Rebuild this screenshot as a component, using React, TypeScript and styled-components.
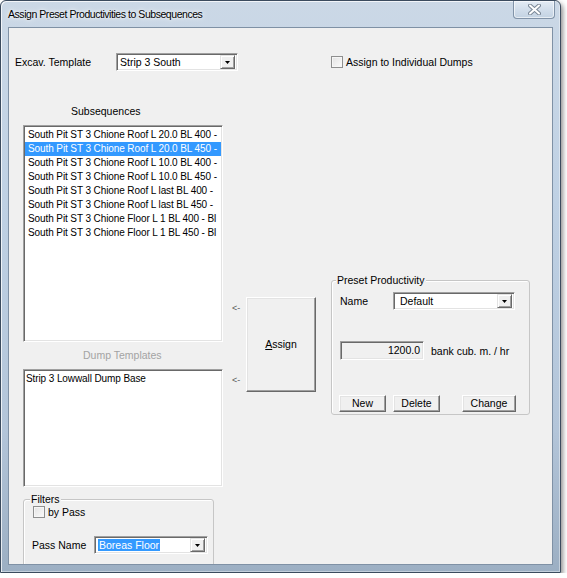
import React from "react";
import styled, { createGlobalStyle } from "styled-components";

const GlobalStyle = createGlobalStyle`
  html, body {
    margin: 0;
    padding: 0;
    background: #ffffff;
  }
  body {
    font-family: "Liberation Sans", Arial, sans-serif;
    font-size: 10.5px;
    color: #000;
  }
  * {
    box-sizing: border-box;
  }
`;

const Window = styled.div`
  width: 561px;
  height: 573px;
  display: flex;
  flex-direction: column;
  padding: 0 7px 7px 7px;
  border: 1px solid #3b4b5e;
  border-radius: 6px 6px 0 0;
  background: linear-gradient(180deg, #cbd8e6 0%, #bfd1e4 35%, #b3c5d9 75%, #9cafc3 100%);
  box-shadow: 2px 3px 5px rgba(0, 0, 0, 0.45), inset 1px 1px 0 rgba(255, 255, 255, 0.75),
    inset -1px -1px 0 rgba(255, 255, 255, 0.4);
`;

const TitleBar = styled.div`
  height: 26px;
  display: flex;
  align-items: flex-start;
`;

const TitleText = styled.span`
  margin-top: 6px;
  line-height: 14px;
  font-size: 10.5px;
  letter-spacing: -0.45px;
  color: #000;
  text-shadow: 0 0 6px rgba(255, 255, 255, 0.95), 0 0 3px rgba(255, 255, 255, 0.9);
`;

const CloseButton = styled.div`
  margin-left: auto;
  margin-right: -2px;
  width: 42px;
  height: 18px;
  display: flex;
  align-items: center;
  justify-content: center;
  border: 1px solid #8193a8;
  border-top: none;
  border-radius: 0 0 4px 4px;
  background: linear-gradient(180deg, #e4ecf5 0%, #d2deeb 50%, #c3d2e2 100%);
  box-shadow: inset 0 0 0 1px rgba(255, 255, 255, 0.6);
`;

const Body = styled.div`
  flex: 1;
  background: #f0f0f0;
  border: 1px solid #7f91a5;
  overflow: hidden;
`;

const TopRow = styled.div`
  display: flex;
  align-items: center;
  height: 18px;
  margin: 25px 0 0 6px;
`;

const FieldLabel = styled.span<{ $w: number }>`
  width: ${({ $w }) => $w}px;
  flex-shrink: 0;
  white-space: nowrap;
`;

const Combo = styled.div<{ $w: number }>`
  width: ${({ $w }) => $w}px;
  height: 18px;
  flex-shrink: 0;
  display: flex;
  align-items: center;
  padding: 2px;
  background: #fff;
  border: 1px solid;
  border-color: #a0a0a0 #ffffff #ffffff #a0a0a0;
  box-shadow: inset 1px 1px 0 #696969, inset -1px -1px 0 #e3e3e3;
`;

const ComboText = styled.span<{ $pl: number }>`
  flex: 1;
  padding-left: ${({ $pl }) => $pl}px;
  white-space: nowrap;
  overflow: hidden;
  line-height: 14px;
`;

const Highlight = styled.span`
  background: #3399ff;
  color: #fff;
  padding: 0 1px;
`;

const DropButton = styled.span`
  width: 15px;
  height: 14px;
  flex-shrink: 0;
  display: flex;
  align-items: center;
  justify-content: center;
  background: #f0f0f0;
  border: 1px solid;
  border-color: #e3e3e3 #696969 #696969 #e3e3e3;
  box-shadow: inset 1px 1px 0 #ffffff, inset -1px -1px 0 #a0a0a0;
`;

const CheckRow = styled.label<{ $ml: number }>`
  display: flex;
  align-items: center;
  margin-left: ${({ $ml }) => $ml}px;
  height: 12px;
`;

const CheckBox = styled.span`
  width: 12px;
  height: 12px;
  flex-shrink: 0;
  margin-right: 3px;
  border: 1px solid #8e8f8f;
  background: linear-gradient(135deg, #e2e2e2 0%, #fbfbfb 100%);
  box-shadow: inset 0 0 0 1px #f6f6f6;
`;

const MainRow = styled.div`
  display: flex;
  align-items: flex-start;
  margin-top: 33px;
  padding-left: 14px;
`;

const LeftCol = styled.div`
  width: 200px;
  display: flex;
  flex-direction: column;
`;

const SectionLabel = styled.div<{ $pl: number; $dim?: boolean; $mt?: number }>`
  height: 14px;
  line-height: 14px;
  padding-left: ${({ $pl }) => $pl}px;
  margin-top: ${({ $mt }) => $mt ?? 0}px;
  margin-bottom: 7px;
  color: ${({ $dim }) => ($dim ? "#a3a3a3" : "#000")};
`;

const ListBox = styled.div<{ $h: number }>`
  height: ${({ $h }) => $h}px;
  background: #fff;
  border: 1px solid;
  border-color: #a0a0a0 #ffffff #ffffff #a0a0a0;
  box-shadow: inset 1px 1px 0 #696969, inset -1px -1px 0 #e3e3e3;
  padding: 2px 1px 1px 1px;
  overflow: hidden;
`;

const ListItem = styled.div<{ $selected?: boolean; $pl?: number }>`
  height: 14px;
  line-height: 14px;
  padding-left: ${({ $pl }) => $pl ?? 3}px;
  font-size: 10px;
  letter-spacing: -0.1px;
  white-space: nowrap;
  overflow: hidden;
  background: ${({ $selected }) => ($selected ? "#3399ff" : "transparent")};
  color: ${({ $selected }) => ($selected ? "#fff" : "#000")};
`;

const Group = styled.div<{ $w: number; $h: number; $mt: number; $pt: number; $pl: number }>`
  position: relative;
  width: ${({ $w }) => $w}px;
  height: ${({ $h }) => $h}px;
  margin-top: ${({ $mt }) => $mt}px;
  padding: ${({ $pt, $pl }) => `${$pt}px 0 0 ${$pl}px`};
  border: 1px solid #c6c6c6;
  border-radius: 3px;
  box-shadow: inset 1px 1px 0 #fff;
  flex-shrink: 0;
`;

const Legend = styled.span<{ $left: number }>`
  position: absolute;
  top: -8px;
  left: ${({ $left }) => $left}px;
  padding: 0 1px;
  line-height: 14px;
  background: #f0f0f0;
  white-space: nowrap;
`;

const FormRow = styled.div<{ $mt?: number; $h: number }>`
  display: flex;
  align-items: center;
  height: ${({ $h }) => $h}px;
  margin-top: ${({ $mt }) => $mt ?? 0}px;
`;

const MidCol = styled.div`
  display: flex;
  margin: 193px 0 0 9px;
`;

const ArrowCol = styled.div`
  width: 14px;
  height: 95px;
  display: flex;
  flex-direction: column;
  justify-content: space-between;
  padding: 5px 0 6px 0;
  font-size: 9px;
  line-height: 12px;
  color: #5a5a5a;
`;

const ClassicButton = styled.button<{ $w: number; $h: number; $push?: boolean }>`
  width: ${({ $w }) => $w}px;
  height: ${({ $h }) => $h}px;
  margin: 0;
  margin-left: ${({ $push }) => ($push ? "auto" : "0")};
  padding: 0;
  font: inherit;
  color: #000;
  background: #f0f0f0;
  border: 1px solid;
  border-color: #ffffff #696969 #696969 #ffffff;
  box-shadow: inset -1px -1px 0 #a0a0a0, inset 1px 1px 0 #e3e3e3;
  flex-shrink: 0;
  line-height: 13px;
`;

const RightCol = styled.div`
  margin: 176px 0 0 15px;
`;

const ValueBox = styled.div`
  width: 84px;
  height: 19px;
  flex-shrink: 0;
  padding-right: 3px;
  text-align: right;
  line-height: 17px;
  background: #f0f0f0;
  border: 1px solid;
  border-color: #a0a0a0 #ffffff #ffffff #a0a0a0;
  box-shadow: inset 1px 1px 0 #696969, inset -1px -1px 0 #e3e3e3;
`;

const UnitLabel = styled.span`
  margin-left: 7px;
  white-space: nowrap;
`;

const ButtonRow = styled.div`
  display: flex;
  gap: 7px;
  width: 177px;
  margin: 35px 0 0 -1px;
`;

const Arrow = () => (
  <svg width="5" height="3" viewBox="0 0 5 3">
    <path d="M0 0h5L2.5 3z" fill="#000" />
  </svg>
);

const subsequences = [
  "South Pit ST 3 Chione Roof L 20.0 BL 400 -",
  "South Pit ST 3 Chione Roof L 20.0 BL 450 -",
  "South Pit ST 3 Chione Roof L 10.0 BL 400 -",
  "South Pit ST 3 Chione Roof L 10.0 BL 450 -",
  "South Pit ST 3 Chione Roof L last BL 400 -",
  "South Pit ST 3 Chione Roof L last BL 450 -",
  "South Pit ST 3 Chione Floor L 1 BL 400 - Bl",
  "South Pit ST 3 Chione Floor L 1 BL 450 - Bl",
];

export default function App() {
  return (
    <>
      <GlobalStyle />
      <Window>
        <TitleBar>
          <TitleText>Assign Preset Productivities to Subsequences</TitleText>
          <CloseButton>
            <svg width="13" height="11" viewBox="0 0 13 11">
              <path d="M2 1.5l9 8M11 1.5l-9 8" stroke="#7a8796" strokeWidth="4" strokeLinecap="round" />
              <path d="M2 1.5l9 8M11 1.5l-9 8" stroke="#ffffff" strokeWidth="2" strokeLinecap="round" />
            </svg>
          </CloseButton>
        </TitleBar>
        <Body>
          <TopRow>
            <FieldLabel $w={101}>Excav. Template</FieldLabel>
            <Combo $w={122}>
              <ComboText $pl={1}>Strip 3 South</ComboText>
              <DropButton>
                <Arrow />
              </DropButton>
            </Combo>
            <CheckRow $ml={93}>
              <CheckBox />
              Assign to Individual Dumps
            </CheckRow>
          </TopRow>

          <MainRow>
            <LeftCol>
              <SectionLabel $pl={48}>Subsequences</SectionLabel>
              <ListBox $h={217}>
                {subsequences.map((s, i) => (
                  <ListItem key={i} $selected={i === 1}>
                    {s}
                  </ListItem>
                ))}
              </ListBox>
              <SectionLabel $pl={60} $dim $mt={6}>
                Dump Templates
              </SectionLabel>
              <ListBox $h={118}>
                <ListItem $pl={1}>Strip 3 Lowwall Dump Base</ListItem>
              </ListBox>
              <Group $w={191} $h={90} $mt={12} $pt={6} $pl={8}>
                <Legend $left={6}>Filters</Legend>
                <CheckRow $ml={1}>
                  <CheckBox />
                  by Pass
                </CheckRow>
                <FormRow $mt={18} $h={18}>
                  <FieldLabel $w={62}>Pass Name</FieldLabel>
                  <Combo $w={114}>
                    <ComboText $pl={1}>
                      <Highlight>Boreas Floor</Highlight>
                    </ComboText>
                    <DropButton>
                      <Arrow />
                    </DropButton>
                  </Combo>
                </FormRow>
              </Group>
            </LeftCol>

            <MidCol>
              <ArrowCol>
                <span>&lt;-</span>
                <span>&lt;-</span>
              </ArrowCol>
              <ClassicButton $w={70} $h={95}>
                <u>A</u>ssign
              </ClassicButton>
            </MidCol>

            <RightCol>
              <Group $w={199} $h={135} $mt={0} $pt={11} $pl={8}>
                <Legend $left={4}>Preset Productivity</Legend>
                <FormRow $h={18}>
                  <FieldLabel $w={53}>Name</FieldLabel>
                  <Combo $w={122}>
                    <ComboText $pl={4}>Default</ComboText>
                    <DropButton>
                      <Arrow />
                    </DropButton>
                  </Combo>
                </FormRow>
                <FormRow $mt={31} $h={19}>
                  <ValueBox>1200.0</ValueBox>
                  <UnitLabel>bank cub. m. / hr</UnitLabel>
                </FormRow>
                <ButtonRow>
                  <ClassicButton $w={47} $h={17}>
                    New
                  </ClassicButton>
                  <ClassicButton $w={47} $h={17}>
                    Delete
                  </ClassicButton>
                  <ClassicButton $w={54} $h={17} $push>
                    Change
                  </ClassicButton>
                </ButtonRow>
              </Group>
            </RightCol>
          </MainRow>
        </Body>
      </Window>
    </>
  );
}
